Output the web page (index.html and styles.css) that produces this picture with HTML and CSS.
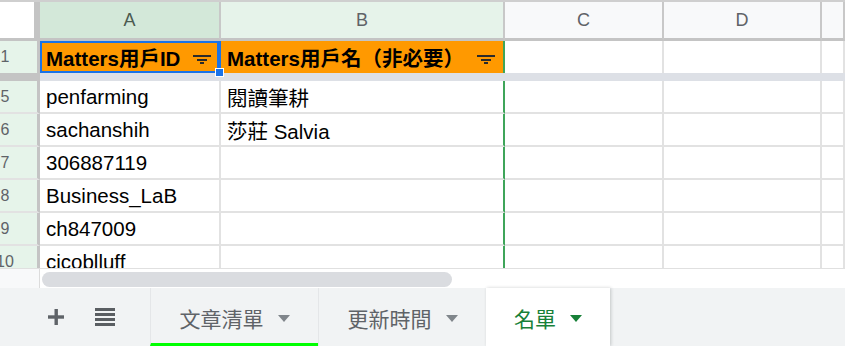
FILE: index.html
```html
<!DOCTYPE html>
<html lang="zh-Hant">
<head>
    <meta charset="UTF-8">
    <title>名單 - Google 試算表</title>
    <link rel="stylesheet" href="styles.css">
</head>
<body>
    <div class="sheet">
        <div class="grid">
            <div class="row head">
                <div class="corner"></div>
                <div class="col-h sel">A</div>
                <div class="col-h part">B</div>
                <div class="col-h">C</div>
                <div class="col-h">D</div>
                <div class="col-h"></div>
            </div>

            <div class="row frozen">
                <div class="rh"><span>1</span></div>
                <div class="cell hdr active">
                    <span>Matters用戶ID</span>
                    <svg class="filter" width="18" height="9" viewBox="0 0 18 9"><rect x="0" y="0" width="18" height="2"/><rect x="4" y="4" width="10" height="2"/><rect x="7" y="7" width="4" height="2"/></svg>
                    <i class="handle"></i>
                </div>
                <div class="cell hdr edge">
                    <span>Matters用戶名（非必要）</span>
                    <svg class="filter" width="18" height="9" viewBox="0 0 18 9"><rect x="0" y="0" width="18" height="2"/><rect x="4" y="4" width="10" height="2"/><rect x="7" y="7" width="4" height="2"/></svg>
                </div>
                <div class="cell"></div>
                <div class="cell"></div>
                <div class="cell"></div>
            </div>

            <div class="row freeze">
                <div class="freeze-rh"></div>
                <div class="freeze-cells"></div>
            </div>

            <div class="body">
                <div class="row">
                    <div class="rh"><span>5</span></div>
                    <div class="cell">penfarming</div>
                    <div class="cell edge">閱讀筆耕</div>
                    <div class="cell"></div>
                    <div class="cell"></div>
                    <div class="cell"></div>
                </div>
                <div class="row">
                    <div class="rh"><span>6</span></div>
                    <div class="cell">sachanshih</div>
                    <div class="cell edge">莎莊 Salvia</div>
                    <div class="cell"></div>
                    <div class="cell"></div>
                    <div class="cell"></div>
                </div>
                <div class="row">
                    <div class="rh"><span>7</span></div>
                    <div class="cell">306887119</div>
                    <div class="cell edge"></div>
                    <div class="cell"></div>
                    <div class="cell"></div>
                    <div class="cell"></div>
                </div>
                <div class="row">
                    <div class="rh"><span>8</span></div>
                    <div class="cell">Business_LaB</div>
                    <div class="cell edge"></div>
                    <div class="cell"></div>
                    <div class="cell"></div>
                    <div class="cell"></div>
                </div>
                <div class="row">
                    <div class="rh"><span>9</span></div>
                    <div class="cell">ch847009</div>
                    <div class="cell edge"></div>
                    <div class="cell"></div>
                    <div class="cell"></div>
                    <div class="cell"></div>
                </div>
                <div class="row">
                    <div class="rh"><span>10</span></div>
                    <div class="cell">cicoblluff</div>
                    <div class="cell edge"></div>
                    <div class="cell"></div>
                    <div class="cell"></div>
                    <div class="cell"></div>
                </div>
            </div>
        </div>

        <div class="hscroll">
            <div class="hscroll-corner"></div>
            <div class="track"><div class="thumb"></div></div>
        </div>

        <div class="tabs">
            <div class="tab-tools">
                <svg width="18" height="18" viewBox="0 0 18 18"><rect x="7.5" y="1" width="3.4" height="16"/><rect x="1" y="7.3" width="16" height="3.4"/></svg>
                <svg width="20" height="18" viewBox="0 0 20 18"><rect x="0" y="0" width="20" height="3"/><rect x="0" y="5" width="20" height="3"/><rect x="0" y="10" width="20" height="3"/><rect x="0" y="15" width="20" height="3"/></svg>
            </div>
            <div class="tab lime">文章清單<i class="caret"></i></div>
            <div class="tab">更新時間<i class="caret"></i></div>
            <div class="tab current">名單<i class="caret"></i></div>
            <div class="tab-rest"></div>
        </div>
    </div>
</body>
</html>
```

FILE: styles.css
```css
* {
    box-sizing: border-box;
}

body {
    margin: 0;
    width: 845px;
    height: 346px;
    overflow: hidden;
    background-color: white;
    font-family: "Liberation Sans", Arial, "Noto Sans CJK TC", sans-serif;
}

.sheet {
    display: flex;
    flex-direction: column;
    height: 346px;
}

.grid {
    height: 269px;
    overflow: hidden;
    border-top: 2px solid #cfcfcf;
    border-bottom: 1px solid #e0e0e0;
    flex-shrink: 0;
}

.row {
    display: grid;
    grid-template-columns: 40px 181px 284px 159px 158px 1fr;
}

/* column letters */
.head {
    height: 39px;
}

.corner {
    background-color: white;
    border-right: 6px solid #c4c4c4;
    border-bottom: 3px solid #c4c4c4;
}

.col-h {
    display: flex;
    align-items: center;
    justify-content: center;
    background-color: #f8f9fa;
    color: #5f6368;
    font-family: "Liberation Sans", Arial, sans-serif;
    font-size: 18px;
    border-right: 2px solid #c8c8c8;
    border-bottom: 3px solid #c4c4c4;
}

.col-h.sel {
    background-color: #d3e8d9;
    color: #4b5a50;
}

.col-h.part {
    background-color: #e6f3ea;
}

/* row numbers */
.rh {
    overflow: hidden;
    display: flex;
    align-items: center;
    background-color: #e6f4ea;
    border-right: 3px solid #c4c4c4;
    border-bottom: 2px solid #e2e2e2;
    color: #5f6368;
    font-size: 16px;
}

.rh span {
    flex-shrink: 0;
    width: 30px;
    margin-left: -10px;
    text-align: center;
}

.cell {
    display: flex;
    align-items: center;
    padding-left: 6px;
    border-right: 2px solid #e2e2e2;
    border-bottom: 2px solid #e2e2e2;
    font-size: 20.5px;
    color: #000;
    white-space: nowrap;
    overflow: hidden;
}

.cell.edge {
    border-right-color: #3fa55a;
}

.body {
    height: 188px;
    overflow: hidden;
}

.body .row {
    height: 33px;
}

/* frozen header row */
.frozen {
    height: 32px;
}

.frozen .rh,
.frozen .cell {
    border-bottom: none;
}

.cell.hdr {
    position: relative;
    overflow: visible;
    background-color: #ff9900;
    font-weight: bold;
    padding-right: 8px;
}

.cell.hdr.active {
    box-shadow: inset 0 0 0 2px #1a73e8;
    border-right-color: #1a73e8;
    z-index: 2;
}

.filter {
    margin-left: auto;
    margin-top: 4px;
    fill: #2b2b2b;
}

.handle {
    position: absolute;
    right: -5px;
    bottom: -4px;
    width: 9px;
    height: 9px;
    background-color: #1a73e8;
    border: 1px solid white;
}

.freeze {
    height: 8px;
}

.freeze-rh {
    background-color: #c4c4c4;
}

.freeze-cells {
    grid-column: 2 / -1;
    background-color: #dde0e6;
}

/* horizontal scroll bar */
.hscroll {
    display: flex;
    height: 19px;
    flex-shrink: 0;
}

.hscroll-corner {
    width: 40px;
    background-color: #f8f9fa;
    border-right: 1px solid #dcdcdc;
}

.track {
    flex: 1;
    padding: 3px 2px 1px 2px;
}

.thumb {
    width: 410px;
    height: 15px;
    border-radius: 8px;
    background-color: #dadce0;
}

/* sheet tabs */
.tabs {
    flex: 1;
    display: flex;
    background-color: #f1f3f4;
}

.tab-tools {
    width: 150px;
    display: flex;
    align-items: center;
    gap: 30px;
    padding-left: 47px;
    fill: #5f6368;
}

.tab-tools svg:last-child {
    fill: #5a5e62;
}

.tab {
    width: 168px;
    display: flex;
    align-items: center;
    justify-content: center;
    gap: 14px;
    padding-top: 2px;
    border-left: 1px solid #e4e6e8;
    color: #5f6368;
    font-family: Roboto, "Noto Sans CJK TC", sans-serif;
    font-size: 21px;
}

.tab.lime {
    border-bottom: 3px solid #00ff00;
    padding-top: 5px;
}

.tab.current {
    width: 124px;
    background-color: white;
    color: #188038;
    border-left: none;
    box-shadow: 1px 0 3px rgba(60, 64, 67, 0.25);
    z-index: 1;
}

.caret {
    width: 0;
    height: 0;
    border-left: 6.5px solid transparent;
    border-right: 6.5px solid transparent;
    border-top: 7px solid #80868b;
}

.tab.current .caret {
    border-top-color: #188038;
}

.tab-rest {
    flex: 1;
}
```
